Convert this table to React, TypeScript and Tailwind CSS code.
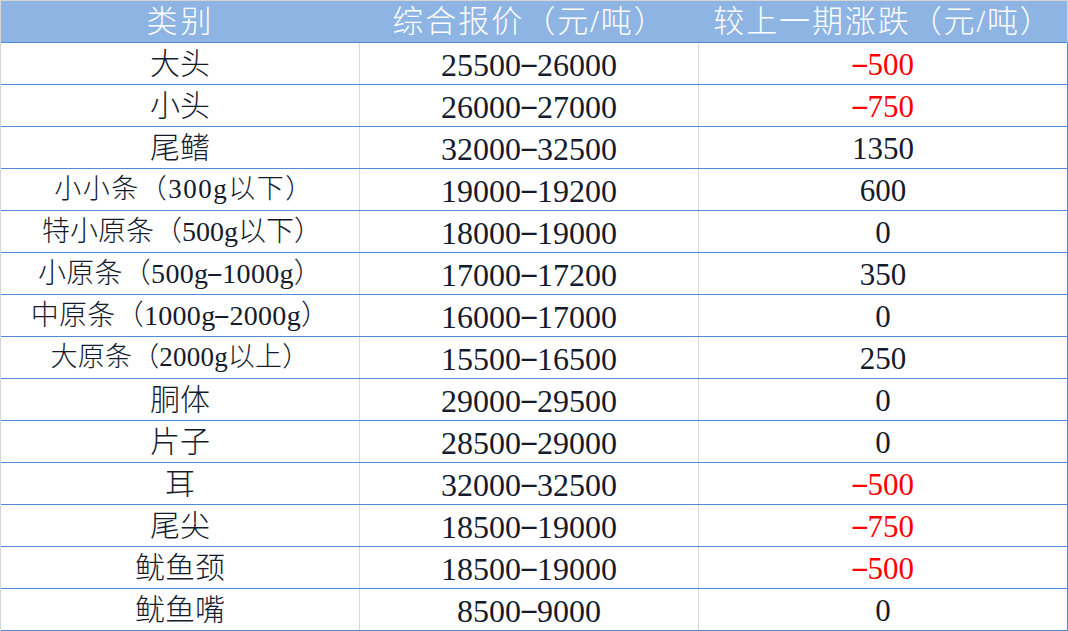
import React from "react";

type Row = {
  name: string;
  nameCls: string;
  price: string;
  change: string;
  red?: boolean;
};

const rows: Row[] = [
  { name: "大头", nameCls: "text-[30px]", price: "25500-26000", change: "-500", red: true },
  { name: "小头", nameCls: "text-[30px]", price: "26000-27000", change: "-750", red: true },
  { name: "尾鳍", nameCls: "text-[30px]", price: "32000-32500", change: "1350" },
  { name: "小小条（300g以下）", nameCls: "text-[27px] tracking-[1.5px] pl-[8px]", price: "19000-19200", change: "600" },
  { name: "特小原条（500g以下）", nameCls: "text-[28px] pl-[4px]", price: "18000-19000", change: "0" },
  { name: "小原条（500g-1000g）", nameCls: "text-[28px] tracking-[0.3px]", price: "17000-17200", change: "350" },
  { name: "中原条（1000g-2000g）", nameCls: "text-[28px] tracking-[0.3px]", price: "16000-17000", change: "0" },
  { name: "大原条（2000g以上）", nameCls: "text-[27px] tracking-[0.2px]", price: "15500-16500", change: "250" },
  { name: "胴体", nameCls: "text-[30px]", price: "29000-29500", change: "0" },
  { name: "片子", nameCls: "text-[30px]", price: "28500-29000", change: "0" },
  { name: "耳", nameCls: "text-[30px]", price: "32000-32500", change: "-500", red: true },
  { name: "尾尖", nameCls: "text-[30px]", price: "18500-19000", change: "-750", red: true },
  { name: "鱿鱼颈", nameCls: "text-[30px]", price: "18500-19000", change: "-500", red: true },
  { name: "鱿鱼嘴", nameCls: "text-[30px]", price: "8500-9000", change: "0" },
];

function Dashed({ s }: { s: string }) {
  const parts = s.split("-");
  return (
    <>
      {parts.map((p, i) => (
        <React.Fragment key={i}>
          {i > 0 && (
            <span className="inline-block w-[0.5em] text-center scale-x-[1.8] -translate-y-[0.08em]">-</span>
          )}
          {p}
        </React.Fragment>
      ))}
    </>
  );
}

export default function App() {
  return (
    <div className="w-[1068px] h-[631px] bg-white border-t border-l border-[#d4d4d4] font-['Liberation_Serif','Noto_Sans_CJK_SC',serif] font-light text-[#141b2d] overflow-hidden">
      <div className="flex h-[42px] bg-[#8db4e2] border-b border-r border-b-[#4f8bd6] border-r-[#c5d9f1] text-white text-[31px] leading-none">
        <div className="w-[359px] flex items-center justify-center tracking-[3px]">类别</div>
        <div className="w-[339px] flex items-center justify-center tracking-[2px]">综合报价（元/吨）</div>
        <div className="flex-1 flex items-center justify-center tracking-[1.9px]">较上一期涨跌（元/吨）</div>
      </div>
      {rows.map((r, i) => (
        <div key={i} className="flex h-[42px] border-b border-r border-[#4f8bd6] leading-none">
          <div className={`w-[359px] border-r border-[#d9d9d9] flex items-center justify-center whitespace-nowrap ${r.nameCls}`}>
            <span>
              <Dashed s={r.name} />
            </span>
          </div>
          <div className="w-[339px] border-r border-[#d9d9d9] flex items-center justify-center text-[32px] pt-[2px]">
            <span>
              <Dashed s={r.price} />
            </span>
          </div>
          <div
            className={`flex-1 flex items-center justify-center text-[31px] pt-[2px] ${r.red ? "text-[#ff0000]" : ""}`}
          >
            <span>
              <Dashed s={r.change} />
            </span>
          </div>
        </div>
      ))}
    </div>
  );
}
